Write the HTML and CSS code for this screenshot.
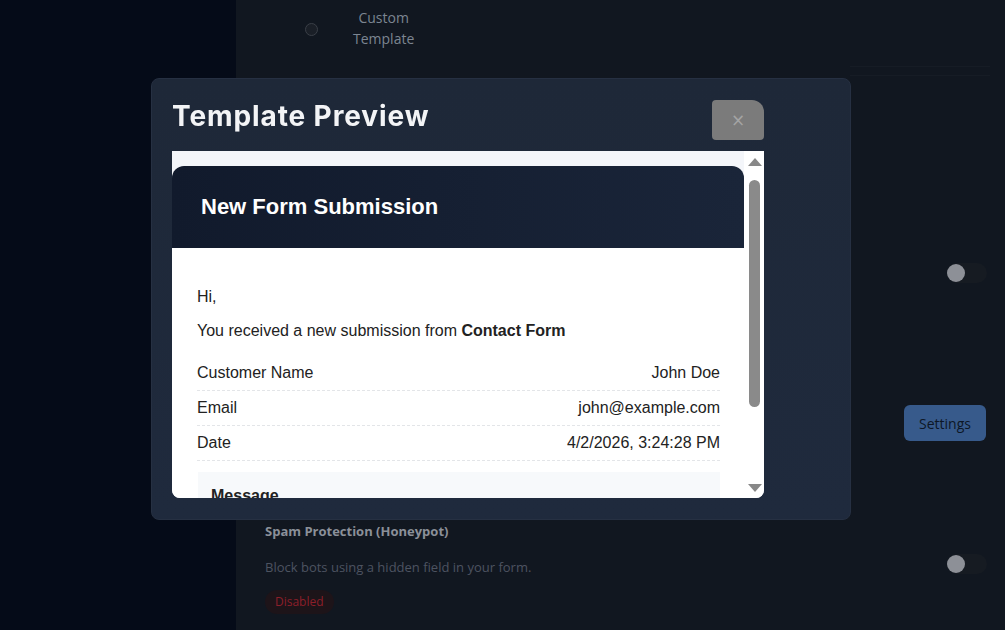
FILE: index.html
```html
<!DOCTYPE html>
<html>
<head>
<meta charset="utf-8">
<link rel="stylesheet" href="styles.css">
</head>
<body>
<div class="app">
  <aside class="sidebar"></aside>
  <main class="main">
    <div class="template-row">
      <span class="radio"></span>
      <span class="radio-label">Custom<br>Template</span>
      <span class="rule"></span>
    </div>
    <div class="toggle-row">
      <span class="toggle"><span class="knob"></span></span>
    </div>
    <div class="settings-row">
      <button class="settings-btn">Settings</button>
    </div>
    <div class="spam-row">
      <div class="spam-info">
        <div class="spam-title">Spam Protection (Honeypot)</div>
        <div class="spam-desc">Block bots using a hidden field in your form.</div>
        <span class="badge">Disabled</span>
      </div>
      <span class="toggle"><span class="knob"></span></span>
    </div>
  </main>
</div>

<div class="modal">
  <div class="modal-head">
    <h2 class="modal-title">Template Preview</h2>
    <button class="close-btn">×</button>
  </div>
  <div class="frame">
    <div class="frame-scroll">
      <div class="email">
        <div class="email-head">New Form Submission</div>
        <div class="email-body">
          <p class="hi">Hi,</p>
          <p class="intro">You received a new submission from <b>Contact Form</b></p>
          <div class="row"><span>Customer Name</span><span>John Doe</span></div>
          <div class="row"><span>Email</span><span>john@example.com</span></div>
          <div class="row"><span>Date</span><span>4/2/2026, 3:24:28 PM</span></div>
          <div class="message"><b>Message</b></div>
        </div>
      </div>
    </div>
    <div class="scrollbar">
      <span class="arrow up"></span>
      <span class="thumb"></span>
      <span class="arrow down"></span>
    </div>
  </div>
</div>
</body>
</html>
```
FILE: styles.css
```css
* { box-sizing: border-box; }
html, body { margin: 0; padding: 0; }
body {
  width: 1005px;
  height: 630px;
  overflow: hidden;
  background: #111720;
  font-family: "Open Sans", "Noto Sans", sans-serif;
}
.app { display: flex; height: 630px; }
.sidebar { width: 236px; background: #050b18; flex: none; }
.main {
  flex: 1;
  background: #111720;
  padding: 0 18px 0 29px;
  display: flex;
  flex-direction: column;
}
.template-row {
  display: flex;
  align-items: center;
  height: 56px;
  position: relative;
}
.radio {
  width: 13px; height: 13px;
  border-radius: 50%;
  border: 1px solid #3a3f47;
  background: #1a1f27;
  margin-left: 40px;
  position: relative;
  top: 1px;
}
.radio-label {
  margin-left: 35px;
  text-align: center;
  color: #7c8591;
  font-size: 14px;
  line-height: 21px;
}
.rule {
  position: absolute;
  left: 585px; top: 66px;
  width: 140px; height: 10px;
  border-top: 1px solid #161c25;
  border-bottom: 1px solid #161c25;
}
.toggle-row {
  display: flex;
  justify-content: flex-end;
  margin-top: 207px;
}
.toggle {
  width: 40px; height: 20px;
  border-radius: 10px;
  background: #161b22;
  position: relative;
  display: inline-block;
}
.knob {
  position: absolute;
  left: 0; top: 1px;
  width: 18px; height: 18px;
  border-radius: 50%;
  background: #8d9097;
}
.settings-row {
  display: flex;
  justify-content: flex-end;
  padding-right: 1px;
  margin-top: 122px;
}
.settings-btn {
  width: 82px; height: 36px;
  border: 0;
  border-radius: 6px;
  background: #375a8b;
  color: #0d1726;
  font-family: "Open Sans", sans-serif;
  font-size: 14px;
}
.spam-row {
  display: flex;
  justify-content: space-between;
  align-items: flex-start;
  margin-top: 81px;
}
.spam-info { display: flex; flex-direction: column; align-items: flex-start; }
.spam-title { color: #8b9099; font-size: 13px; font-weight: 700; line-height: 18px; }
.spam-desc { color: #4d5360; font-size: 13px; line-height: 18px; margin-top: 18px; }
.badge {
  margin-top: 14px;
  padding: 0 10px;
  height: 24px;
  line-height: 24px;
  border-radius: 12px;
  background: #1d1419;
  color: #8c1f2a;
  font-size: 12px;
}
.spam-row .toggle { margin-top: 32px; }

/* modal */
.modal {
  position: fixed;
  left: 151px; top: 78px;
  width: 700px; height: 442px;
  border-radius: 8px;
  background: linear-gradient(180deg, #1e2838 0%, #1f2a3d 100%);
  border: 1px solid #263042;
  padding: 20px 86px 21px 20px;
  display: flex;
  flex-direction: column;
}
.modal-head {
  display: flex;
  justify-content: space-between;
  align-items: center;
  height: 42px;
}
.modal-title {
  margin: 0;
  color: #f3f4f6;
  font-family: "Inter", sans-serif;
  font-weight: 700;
  font-size: 28px;
  letter-spacing: 0.9px;
  position: relative;
  top: -4px;
}
.close-btn {
  width: 52px; height: 40px;
  border: 0;
  border-radius: 4px 12px 4px 4px;
  background: #7b7b7b;
  color: #a4a4a4;
  font-size: 17px;
  line-height: 1;
  padding: 0;
  font-family: "DejaVu Sans", sans-serif;
}
.frame {
  margin-top: 10px;
  height: 347px;
  width: 592px;
  background: #f4f6fa;
  border-radius: 0 0 8px 8px;
  overflow: hidden;
  display: flex;
}
.frame-scroll {
  flex: 1;
  padding-top: 15px;
  overflow: hidden;
}
.email {
  width: 572px;
  background: #fff;
  border-radius: 12px 12px 0 0;
  font-family: "Liberation Sans", Arial, sans-serif;
  color: #222;
  height: 400px;
}
.email-head {
  height: 82px;
  border-radius: 12px 12px 0 0;
  background: linear-gradient(90deg, #111a2c 0%, #1a2539 100%);
  color: #fff;
  font-weight: 700;
  font-size: 22px;
  padding-left: 29px;
  display: flex;
  align-items: center;
}
.email-body { padding: 39px 24px 0 25px; }
.email-body p { margin: 0; font-size: 16px; line-height: 20px; }
.intro { margin-top: 14px !important; }
.row {
  display: flex;
  justify-content: space-between;
  font-size: 16px;
  height: 35px;
  line-height: 34px;
  border-bottom: 1px dashed #e3e5e8;
}
.row:first-of-type { margin-top: 15px; }
.message {
  margin-top: 11px;
  background: #f7f9fb;
  padding: 15px 13px;
  font-size: 16px;
  margin-left: 1px;
}
.scrollbar {
  width: 20px;
  flex: none;
  background: #fff;
  position: relative;
}
.thumb {
  position: absolute;
  left: 5px; top: 29px;
  width: 11px; height: 227px;
  border-radius: 6px;
  background: #8a8a8a;
}
.arrow {
  position: absolute;
  left: 4px;
  width: 0; height: 0;
  border-left: 7px solid transparent;
  border-right: 7px solid transparent;
}
.arrow.up { top: 7px; border-bottom: 8px solid #888; }
.arrow.down { bottom: 6px; border-top: 8px solid #888; }
```
